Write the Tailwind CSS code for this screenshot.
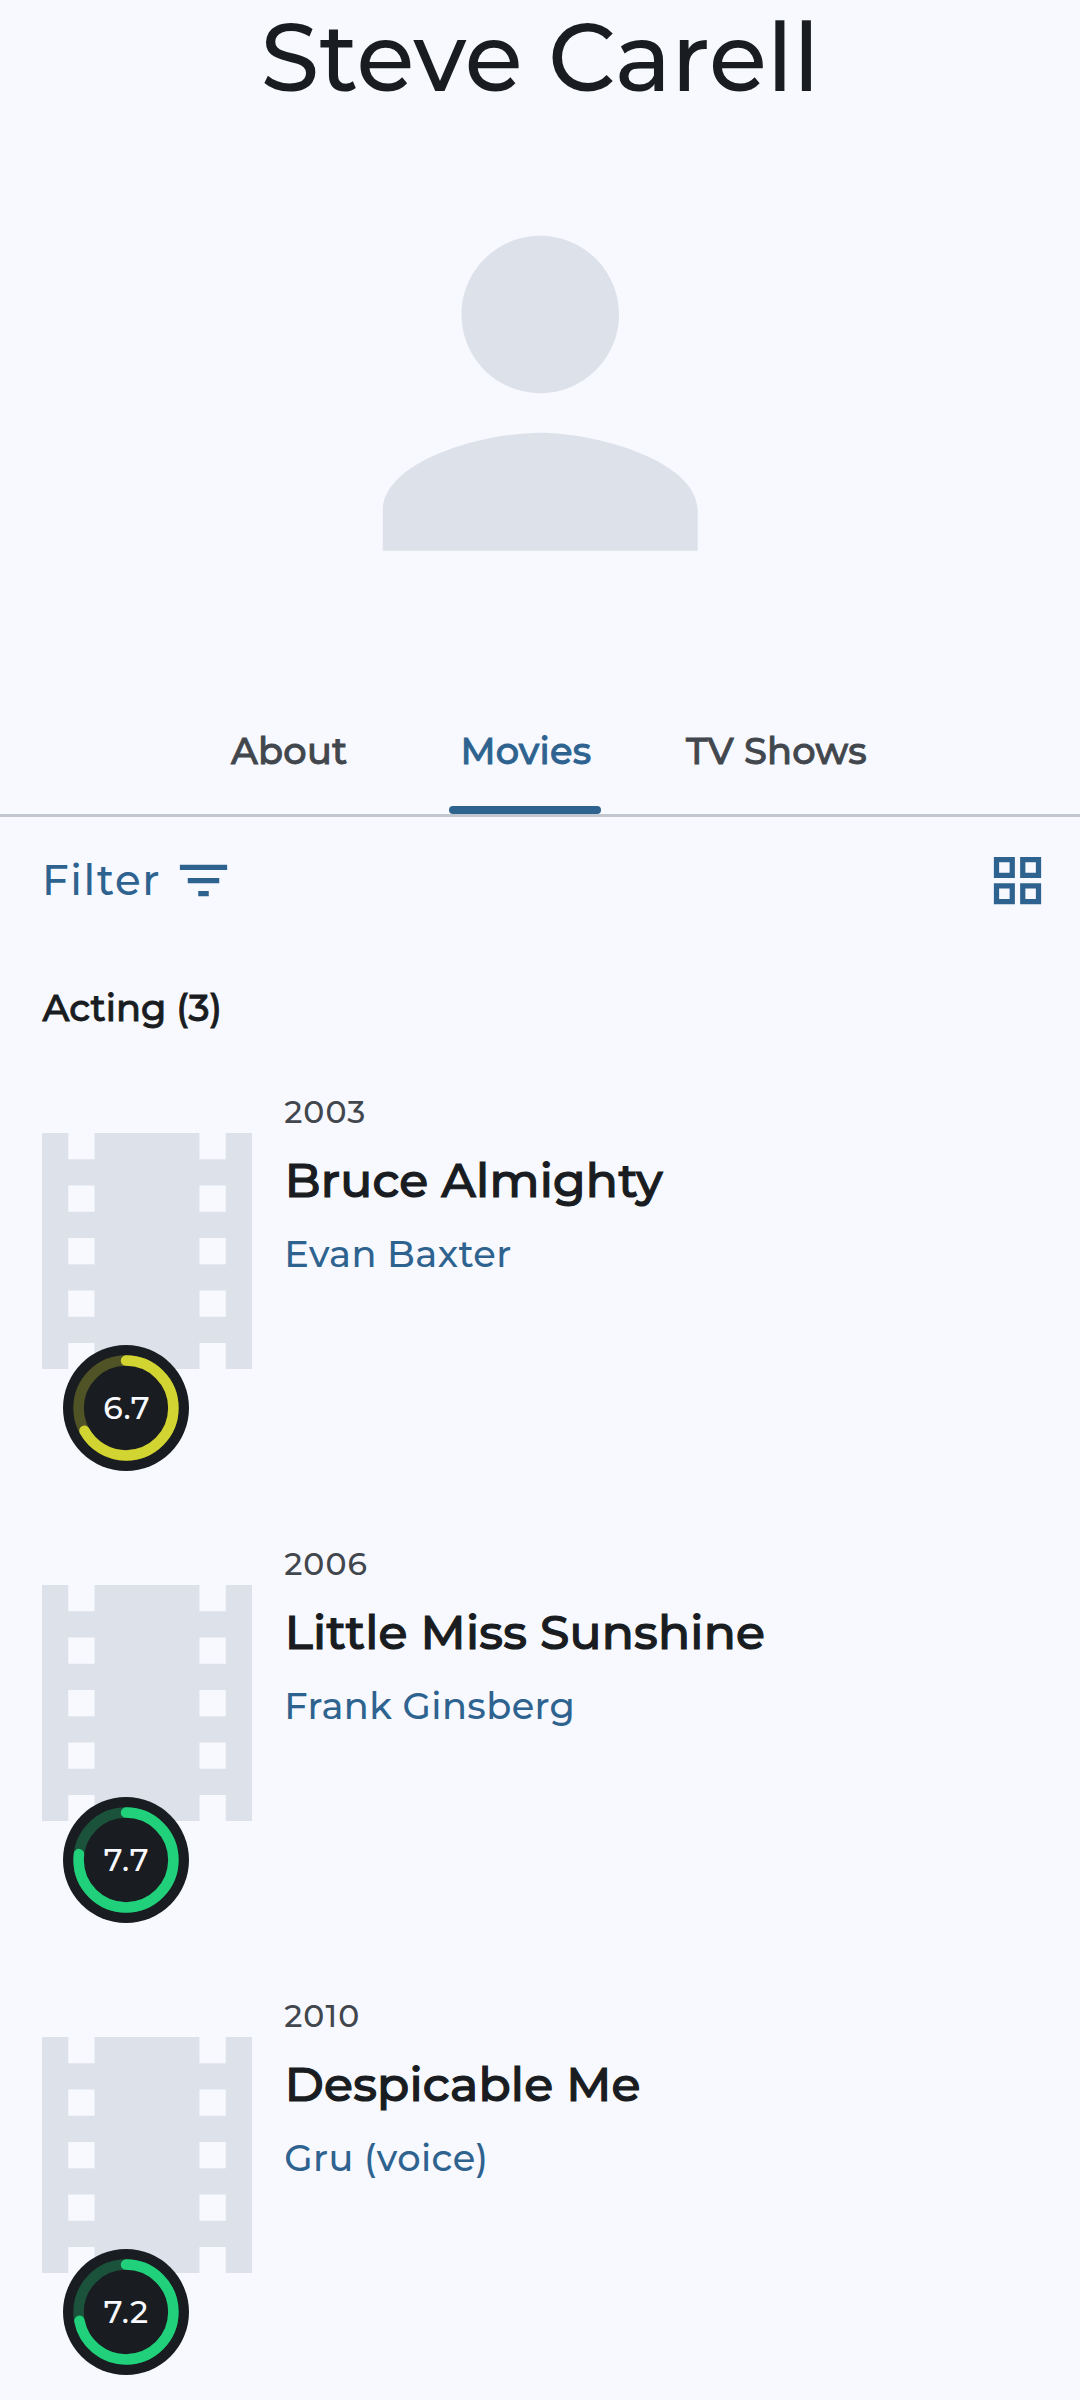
<!DOCTYPE html>
<html lang="en">
<head>
<meta charset="utf-8">
<title>Steve Carell</title>
<script src="https://cdn.jsdelivr.net/npm/@tailwindcss/browser@4"></script>
</head>
<body class="w-[1080px] h-[2400px] overflow-hidden bg-[#f8f9ff] font-['Montserrat','Inter',sans-serif] font-medium text-[#191c20] whitespace-nowrap">
<svg class="hidden">
  <symbol id="film" viewBox="4 3 16 18"><path d="M18 3v2h-2V3H8v2H6V3H4v18h2v-2h2v2h8v-2h2v2h2V3h-2zM8 17H6v-2h2v2zm0-4H6v-2h2v2zm0-4H6V7h2v2zm10 8h-2v-2h2v2zm0-4h-2v-2h2v2zm0-4h-2V7h2v2z"/></symbol>
</svg>

<header>
  <h1 class="text-center text-[94.5px] leading-[116px]">Steve Carell</h1>
  <svg class="mt-[41.2px] ml-[304px] size-[472.5px] fill-[#dde2ea]" viewBox="0 0 24 24"><path d="M12 12c2.21 0 4-1.79 4-4s-1.79-4-4-4-4 1.79-4 4 1.79 4 4 4zm0 2c-2.67 0-8 1.34-8 4v2h16v-2c0-2.66-5.33-4-8-4z"/></svg>
</header>

<nav class="mt-[97.3px] flex h-[90px] border-b-3 border-[#c2c7cf] pl-[231px] text-[36.75px] leading-[48px] tracking-[0.2px] text-[#42474e] [-webkit-text-stroke:0.9px]">
  <a class="w-[218px]">About</a>
  <a class="relative w-[152px] pl-[11.5px] text-[#2e6390]">Movies<span class="absolute inset-x-0 bottom-0 h-2 rounded-[4px] bg-[#2e6390]"></span></a>
  <a class="ml-[85px]">TV Shows</a>
</nav>

<main>
  <div class="mt-8 flex h-[63px] items-center justify-between pr-[31px] pl-[42px] text-[#2e6390]">
    <button class="flex items-center">
      <span class="w-[130px] text-left text-[42px] leading-[62px] tracking-[1.6px]">Filter</span>
      <svg class="size-[63px] fill-current" viewBox="0 0 24 24"><path d="M10 18h4v-2h-4v2zM3 6v2h18V6H3zm3 7h12v-2H6v2z"/></svg>
    </button>
    <svg class="size-[63px] fill-current" viewBox="0 0 24 24"><path fill-rule="evenodd" d="M3 3v8h8V3H3zm6 6H5V5h4v4zm-6 4v8h8v-8H3zm6 6H5v-4h4v4zm4-16v8h8V3h-8zm6 6h-4V5h4v4zm-6 4v8h8v-8h-8zm6 6h-4v-4h4v4z"/></svg>
  </div>
  <h2 class="mt-[72.5px] pl-[42.5px] text-[36.75px] leading-[48px] [-webkit-text-stroke:0.9px]">Acting (3)</h2>

  <ul class="mt-[59.7px]">
    <li class="flex h-[452px] gap-8 pl-[42.2px]">
      <div class="relative w-[210px] pt-[40.5px]">
        <svg class="h-[236.25px] w-[210px] fill-[#dde2ea]"><use href="#film"/></svg>
        <div class="absolute top-[253px] left-[21px] size-[126px]">
          <svg class="size-[126px]" viewBox="0 0 126 126" fill="none"><circle cx="63" cy="63" r="63" fill="#191c20"/><circle cx="63" cy="63" r="47.4" stroke="#d2d531" stroke-opacity=".3" stroke-width="10.5"/><circle cx="63" cy="63" r="47.4" stroke="#d2d531" stroke-width="10.5" stroke-linecap="round" pathLength="100" stroke-dasharray="67 100" transform="rotate(-90 63 63)"/></svg>
          <span class="absolute inset-0 pl-10 text-[31.5px] leading-[126px] tracking-[0.6px] text-[#f8f9ff]">6.7</span>
        </div>
      </div>
      <div class="pt-[2px]">
        <p class="text-[31.5px] leading-9 tracking-[1.1px] text-[#42474e]">2003</p>
        <h3 class="mt-5 pl-[0.6px] text-[47.25px] leading-[60px] tracking-[0.2px] [-webkit-text-stroke:1.2px]">Bruce Almighty</h3>
        <p class="mt-5 text-[36.75px] leading-[48px] tracking-[0.4px] text-[#2e6390]">Evan Baxter</p>
      </div>
    </li>
    <li class="flex h-[452px] gap-8 pl-[42.2px]">
      <div class="relative w-[210px] pt-[40.5px]">
        <svg class="h-[236.25px] w-[210px] fill-[#dde2ea]"><use href="#film"/></svg>
        <div class="absolute top-[253px] left-[21px] size-[126px]">
          <svg class="size-[126px]" viewBox="0 0 126 126" fill="none"><circle cx="63" cy="63" r="63" fill="#191c20"/><circle cx="63" cy="63" r="47.4" stroke="#21d07a" stroke-opacity=".3" stroke-width="10.5"/><circle cx="63" cy="63" r="47.4" stroke="#21d07a" stroke-width="10.5" stroke-linecap="round" pathLength="100" stroke-dasharray="77 100" transform="rotate(-90 63 63)"/></svg>
          <span class="absolute inset-0 pl-[40.5px] text-[31.5px] leading-[126px] tracking-[1px] text-[#f8f9ff]">7.7</span>
        </div>
      </div>
      <div class="pt-[2px]">
        <p class="text-[31.5px] leading-9 tracking-[1.1px] text-[#42474e]">2006</p>
        <h3 class="mt-5 pl-[0.6px] text-[47.25px] leading-[60px] tracking-[0.2px] [-webkit-text-stroke:1.2px]">Little Miss Sunshine</h3>
        <p class="mt-5 text-[36.75px] leading-[48px] tracking-[0.4px] text-[#2e6390]">Frank Ginsberg</p>
      </div>
    </li>
    <li class="flex h-[452px] gap-8 pl-[42.2px]">
      <div class="relative w-[210px] pt-[40.5px]">
        <svg class="h-[236.25px] w-[210px] fill-[#dde2ea]"><use href="#film"/></svg>
        <div class="absolute top-[253px] left-[21px] size-[126px]">
          <svg class="size-[126px]" viewBox="0 0 126 126" fill="none"><circle cx="63" cy="63" r="63" fill="#191c20"/><circle cx="63" cy="63" r="47.4" stroke="#21d07a" stroke-opacity=".3" stroke-width="10.5"/><circle cx="63" cy="63" r="47.4" stroke="#21d07a" stroke-width="10.5" stroke-linecap="round" pathLength="100" stroke-dasharray="72 100" transform="rotate(-90 63 63)"/></svg>
          <span class="absolute inset-0 pl-[40.5px] text-[31.5px] leading-[126px] tracking-[0.8px] text-[#f8f9ff]">7.2</span>
        </div>
      </div>
      <div class="pt-[2px]">
        <p class="text-[31.5px] leading-9 tracking-[1.1px] text-[#42474e]">2010</p>
        <h3 class="mt-5 pl-[0.6px] text-[47.25px] leading-[60px] tracking-[0.2px] [-webkit-text-stroke:1.2px]">Despicable Me</h3>
        <p class="mt-5 text-[36.75px] leading-[48px] tracking-[0.4px] text-[#2e6390]">Gru (voice)</p>
      </div>
    </li>
  </ul>
</main>
</body>
</html>
